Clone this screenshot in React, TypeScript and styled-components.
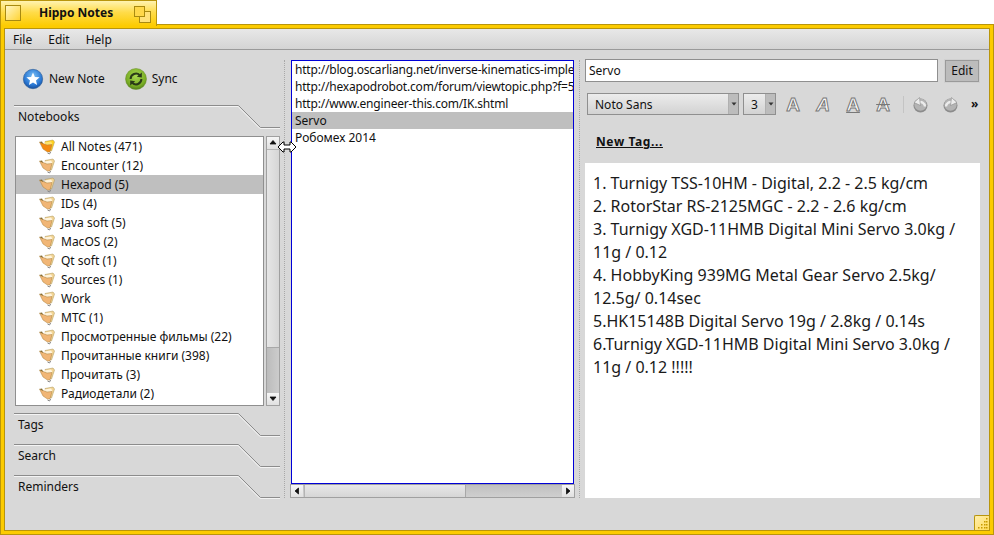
import styled, { createGlobalStyle } from 'styled-components';

const GlobalStyle = createGlobalStyle`
  html, body {
    margin: 0;
    padding: 0;
    background: #ffffff;
  }
  body {
    font-family: "Noto Sans", sans-serif;
    font-size: 12px;
    color: #111111;
  }
  * {
    box-sizing: border-box;
  }
`;

const Page = styled.div`
  position: relative;
  width: 994px;
  height: 535px;
  display: flex;
  flex-direction: column;
  overflow: hidden;
`;

const TitleTab = styled.div`
  position: relative;
  z-index: 1;
  width: 157px;
  height: 26px;
  margin-bottom: -2px;
  flex: none;
  display: flex;
  align-items: flex-start;
  padding: 4px 5px 0 4px;
  background: linear-gradient(#fff3b0 0, #ffdc4a 45%, #fccb00 100%);
  border: 1px solid #b8950c;
  border-bottom: none;
`;

const TabSquare = styled.div`
  width: 16px;
  height: 16px;
  flex: none;
  border: 1px solid #a88a10;
  background: linear-gradient(135deg, #fff6c4, #ffd435);
`;

const TabTitle = styled.div`
  flex: 1;
  padding-left: 18px;
  line-height: 16px;
  font-weight: 700;
  font-size: 12px;
`;

const Frame = styled.div`
  flex: 1;
  min-height: 0;
  padding: 3px;
  background: #fccb00;
  border: 1px solid #b8950c;
  position: relative;
`;

const FrameInner = styled.div`
  height: 100%;
  display: flex;
  flex-direction: column;
  background: #d8d8d8;
  border: 1px solid #b8950c;
`;

const MenuBar = styled.div`
  height: 21px;
  flex: none;
  display: flex;
  align-items: center;
  padding-left: 8px;
  gap: 16px;
  background: linear-gradient(#e8e8e8, #d4d4d4);
  border-bottom: 1px solid #9a9a9a;
`;

const MenuItem = styled.span`
  font-size: 12px;
`;

const Main = styled.div`
  flex: 1;
  min-height: 0;
  display: flex;
  padding: 10px 9px 0 9px;
`;

const LeftColumn = styled.div`
  width: 266px;
  flex: none;
  display: flex;
  flex-direction: column;
`;

const ActionBar = styled.div`
  height: 45px;
  padding: 0 0 8px 8px;
  display: flex;
  align-items: center;
  gap: 20px;
`;

const ActionButton = styled.div`
  display: flex;
  align-items: center;
  gap: 5px;
`;

const SectionHead = styled.div<{ $gap?: number }>`
  position: relative;
  height: 23px;
  flex: none;
  margin-top: ${(p) => p.$gap ?? 0}px;
  padding: 3px 0 0 4px;
`;

const BevelLine = styled.svg`
  position: absolute;
  left: 0;
  top: 0;
`;

const SectionLabel = styled.span`
  position: relative;
`;

const TreeRow = styled.div`
  height: 270px;
  flex: none;
  margin-top: 8px;
  display: flex;
  gap: 2px;
`;

const TreeList = styled.div`
  width: 249px;
  margin-left: 1px;
  background: #ffffff;
  border: 1px solid #8f8f8f;
  overflow: hidden;
`;

const TreeItem = styled.div<{ $active?: boolean }>`
  height: 19px;
  display: flex;
  align-items: center;
  padding-left: 23px;
  gap: 6px;
  white-space: nowrap;
  background: ${(p) => (p.$active ? '#bfbfbf' : 'transparent')};
`;

const VScroll = styled.div`
  width: 14px;
  flex: none;
  display: flex;
  flex-direction: column;
  border: 1px solid #a0a0a0;
  background: #c4c4c4;
`;

const HScroll = styled.div`
  height: 14px;
  flex: none;
  display: flex;
  border: 1px solid #a0a0a0;
  background: linear-gradient(#c0c0c0, #cfcfcf);
`;

const ScrollButton = styled.div`
  width: 12px;
  height: 12px;
  flex: none;
  display: flex;
  align-items: center;
  justify-content: center;
  background: linear-gradient(#f6f6f6, #e0e0e0);
`;

const VThumb = styled.div`
  height: 199px;
  background: linear-gradient(90deg, #e6e6e6, #d6d6d6);
  border-top: 1px solid #b4b4b4;
  border-bottom: 1px solid #a8a8a8;
`;

const VTrack = styled.div`
  flex: 1;
  background: linear-gradient(90deg, #bcbcbc, #cccccc);
`;

const HThumb = styled.div`
  width: 162px;
  margin-left: 1px;
  background: linear-gradient(#e8e8e8, #d6d6d6);
  border-left: 1px solid #b4b4b4;
  border-right: 1px solid #a8a8a8;
`;

const HTrack = styled.div`
  flex: 1;
`;

const Splitter = styled.div`
  width: 10px;
  flex: none;
  padding-left: 4px;
  display: flex;
`;

const SplitterDots = styled.div`
  width: 1px;
  height: 438px;
  border-left: 1px dotted #a8a8a8;
`;

const NoteColumn = styled.div`
  width: 285px;
  height: 438px;
  flex: none;
  display: flex;
  flex-direction: column;
`;

const NoteList = styled.div`
  height: 424px;
  flex: none;
  margin: 0 1px;
  background: #ffffff;
  border: 1px solid #0000d8;
  overflow: hidden;
`;

const NoteItem = styled.div<{ $active?: boolean; $url?: boolean }>`
  height: 17px;
  line-height: 17px;
  padding-left: 3px;
  white-space: nowrap;
  overflow: hidden;
  letter-spacing: ${(p) => (p.$url ? '-0.19px' : 'normal')};
  background: ${(p) => (p.$active ? '#bfbfbf' : 'transparent')};
`;

const EditorColumn = styled.div`
  width: 395px;
  height: 438px;
  flex: none;
  display: flex;
  flex-direction: column;
`;

const TitleRow = styled.div`
  height: 23px;
  flex: none;
  margin-top: -1px;
  display: flex;
  align-items: flex-start;
  justify-content: space-between;
`;

const TitleInput = styled.div`
  width: 353px;
  height: 23px;
  line-height: 21px;
  padding-left: 3px;
  background: #ffffff;
  border: 1px solid #8f8f8f;
`;

const EditButton = styled.div`
  width: 34px;
  height: 22px;
  margin: 1px 1px 0 0;
  line-height: 20px;
  text-align: center;
  background: #bcbcbc;
  border: 1px solid #9a9a9a;
  outline: 1px solid #d0d0d0;
`;

const FormatRow = styled.div`
  height: 23px;
  flex: none;
  margin-top: 11px;
  padding-left: 2px;
  display: flex;
  align-items: flex-start;
`;

const Combo = styled.div<{ $width: number }>`
  width: ${(p) => p.$width}px;
  height: 22px;
  flex: none;
  display: flex;
  background: linear-gradient(#ececec, #d2d2d2);
  border: 1px solid #8f8f8f;
  margin-right: 4px;
`;

const ComboText = styled.div`
  flex: 1;
  line-height: 21px;
  padding-left: 7px;
`;

const ComboArrow = styled.div`
  width: 10px;
  display: flex;
  align-items: center;
  justify-content: center;
  background: #bcbcbc;
  border-left: 1px solid #b0b0b0;
`;

const GlyphGroup = styled.div`
  display: flex;
  flex: none;
  margin-left: -2px;
`;

const FormatGlyph = styled.span<{ $italic?: boolean; $under?: boolean; $strike?: boolean }>`
  width: 30px;
  flex: none;
  text-align: center;
  font-family: "Liberation Sans", sans-serif;
  font-weight: 700;
  font-size: 19px;
  line-height: 23px;
  color: #fafafa;
  -webkit-text-stroke: 1px #787878;
  font-style: ${(p) => (p.$italic ? 'italic' : 'normal')};
  text-decoration: ${(p) => (p.$under ? 'underline' : p.$strike ? 'line-through' : 'none')};
`;

const ToolSeparator = styled.div`
  width: 1px;
  height: 17px;
  flex: none;
  margin: 3px 1px 0 5px;
  background: #c4c4c4;
`;

const HistoryIcon = styled.svg`
  flex: none;
  margin: 4px 7px 0 8px;
`;

const MoreGlyph = styled.span`
  margin-left: 6px;
  line-height: 22px;
  font-size: 12px;
  font-weight: 700;
`;

const TagRow = styled.div`
  height: 47px;
  flex: none;
  padding: 17px 0 0 11px;
`;

const NewTag = styled.span`
  font-weight: 700;
  font-size: 12px;
  letter-spacing: 0.6px;
  text-decoration: underline;
`;

const Editor = styled.div`
  flex: 1;
  min-height: 0;
  background: #ffffff;
  padding: 9px 8px;
  font-size: 16px;
  line-height: 23px;
  color: #1a1a1a;
`;

const Grip = styled.div`
  position: absolute;
  right: 4px;
  bottom: 4px;
  width: 15px;
  height: 15px;
  background: linear-gradient(135deg, #ffeeaa, #ffdc5c);
  border-left: 1px solid #b8950c;
  border-top: 1px solid #b8950c;
  border-top-left-radius: 2px;
`;

const GripDots = styled.svg`
  display: block;
`;

const CursorOverlay = styled.svg`
  position: absolute;
  z-index: 2;
  left: 277px;
  top: 140px;
`;

const TabOverlap = styled.svg`
  flex: none;
  margin: 1px 0 0 0;
`;

const treeItems = [
  'All Notes (471)',
  'Encounter (12)',
  'Hexapod (5)',
  'IDs (4)',
  'Java soft (5)',
  'MacOS (2)',
  'Qt soft (1)',
  'Sources (1)',
  'Work',
  'МТС (1)',
  'Просмотренные фильмы (22)',
  'Прочитанные книги (398)',
  'Прочитать (3)',
  'Радиодетали (2)',
];

const noteItems = [
  'http://blog.oscarliang.net/inverse-kinematics-imple',
  'http://hexapodrobot.com/forum/viewtopic.php?f=5',
  'http://www.engineer-this.com/IK.shtml',
  'Servo',
  'Робомех 2014',
];

const servoLines = [
  '1. Turnigy TSS-10HM - Digital, 2.2 - 2.5 kg/cm',
  '2. RotorStar RS-2125MGC - 2.2 - 2.6 kg/cm',
  '3. Turnigy XGD-11HMB Digital Mini Servo 3.0kg / 11g / 0.12',
  '4. HobbyKing 939MG Metal Gear Servo 2.5kg/ 12.5g/ 0.14sec',
  '5.HK15148B Digital Servo 19g / 2.8kg / 0.14s',
  '6.Turnigy XGD-11HMB Digital Mini Servo 3.0kg / 11g / 0.12 !!!!!',
];

function FolderIcon({ main }: { main?: boolean }) {
  const back = main ? '#ffd21f' : '#f3d596';
  const paper = main ? '#ffe36a' : '#fff4dc';
  const front = main ? '#f58a0f' : '#f1b676';
  return (
    <svg width="16" height="16" viewBox="0 0 16 16">
      <path d="M6 2.5 L14 1 L15.5 3 L12.5 12 L8 9 Z" fill={back} stroke="#a89050" strokeWidth="0.5" />
      <path d="M5 3.5 L12 2.5 L13.2 4.5 L10.5 10 Z" fill={paper} />
      <path d="M0.5 3 L8 6 L13 5.5 L11 13 L8.5 13 L4 10 Z" fill={front} stroke="#a8803c" strokeWidth="0.5" />
      <path d="M0.5 3 L3 2.4 L4.2 5 Z" fill="#80682c" />
      <path d="M8.5 14 L10.5 15 L11.7 13" fill="none" stroke="#8a8a8a" strokeWidth="1" />
    </svg>
  );
}

function SectionTitle({ label, gap }: { label: string; gap?: number }) {
  return (
    <SectionHead $gap={gap}>
      <BevelLine width="266" height="24">
        <path d="M0 0.5 H224.5 L246.5 22.5 H266" fill="none" stroke="#8c8c8c" />
        <path d="M0 1.5 H224 L246 23.5 H266" fill="none" stroke="#f4f4f4" />
      </BevelLine>
      <SectionLabel>{label}</SectionLabel>
    </SectionHead>
  );
}

function Arrow({ dir }: { dir: 'up' | 'down' | 'left' | 'right' }) {
  const points = {
    up: '1,5 4,1.5 7,5',
    down: '1,2 4,5.5 7,2',
    left: '5.5,1 2,4 5.5,7',
    right: '2.5,1 6,4 2.5,7',
  }[dir];
  return (
    <svg width="8" height="8" viewBox="0 0 8 8">
      <polygon points={points} fill="#111111" stroke="#111111" strokeWidth="0.8" />
    </svg>
  );
}

function ComboCaret() {
  return (
    <svg width="6" height="4" viewBox="0 0 6 4">
      <polygon points="0.5,0.5 5.5,0.5 3,3.5" fill="#333333" />
    </svg>
  );
}

function NewNoteIcon() {
  return (
    <svg width="22" height="22" viewBox="0 0 22 22">
      <defs>
        <radialGradient id="blueBall" cx="50%" cy="35%" r="65%">
          <stop offset="0" stopColor="#7cc0f4" />
          <stop offset="0.7" stopColor="#2a78d4" />
          <stop offset="1" stopColor="#174f9c" />
        </radialGradient>
      </defs>
      <circle cx="11" cy="11" r="9.7" fill="url(#blueBall)" stroke="#2b5a94" strokeWidth="0.6" />
      <polygon
        points="11,4.5 12.9,8.9 17.6,9.3 14,12.4 15.1,17 11,14.6 6.9,17 8,12.4 4.4,9.3 9.1,8.9"
        fill="#ffffff"
      />
    </svg>
  );
}

function SyncIcon() {
  return (
    <svg width="22" height="22" viewBox="0 0 22 22">
      <defs>
        <radialGradient id="greenBall" cx="50%" cy="35%" r="65%">
          <stop offset="0" stopColor="#a8d850" />
          <stop offset="0.75" stopColor="#78ac24" />
          <stop offset="1" stopColor="#52801a" />
        </radialGradient>
      </defs>
      <circle cx="11" cy="11" r="10.5" fill="url(#greenBall)" stroke="#6a8f2c" strokeWidth="0.5" />
      <path d="M5.6 11 A5.4 5.4 0 0 1 14.8 7.2" fill="none" stroke="#2a3a18" strokeWidth="2" />
      <polygon points="16.8,4.4 16.8,9.6 11.8,8.8" fill="#2a3a18" />
      <path d="M16.4 11 A5.4 5.4 0 0 1 7.2 14.8" fill="none" stroke="#2a3a18" strokeWidth="2" />
      <polygon points="5.2,17.6 5.2,12.4 10.2,13.2" fill="#2a3a18" />
    </svg>
  );
}

function HistoryGlyph({ flip }: { flip?: boolean }) {
  return (
    <HistoryIcon width="15" height="16" viewBox="0 0 15 16">
      <g transform={flip ? 'translate(15,0) scale(-1,1)' : undefined}>
        <circle cx="7.5" cy="8.6" r="7" fill="#8c8c8c" />
        <circle cx="7.5" cy="7.6" r="6.2" fill="#b4b4b4" />
        <path d="M12 9.5 A4.5 4.5 0 0 0 5.5 5.5" fill="none" stroke="#ececec" strokeWidth="2.4" />
        <polygon points="6.5,0.5 1,5.5 7.5,8.5" fill="#ececec" stroke="#8c8c8c" strokeWidth="0.6" />
      </g>
    </HistoryIcon>
  );
}

export default function App() {
  return (
    <Page>
      <GlobalStyle />
      <TitleTab>
        <TabSquare />
        <TabTitle>Hippo Notes</TabTitle>
        <TabOverlap width="17" height="17" viewBox="0 0 17 17">
          <rect x="5.5" y="5.5" width="11" height="11" fill="#ffe27a" stroke="#a88a10" />
          <rect x="0.5" y="0.5" width="10" height="10" fill="#ffd84a" stroke="#a88a10" />
        </TabOverlap>
      </TitleTab>
      <Frame>
        <FrameInner>
          <MenuBar>
            <MenuItem>File</MenuItem>
            <MenuItem>Edit</MenuItem>
            <MenuItem>Help</MenuItem>
          </MenuBar>
          <Main>
            <LeftColumn>
              <ActionBar>
                <ActionButton>
                  <NewNoteIcon />
                  <span>New Note</span>
                </ActionButton>
                <ActionButton>
                  <SyncIcon />
                  <span>Sync</span>
                </ActionButton>
              </ActionBar>
              <SectionTitle label="Notebooks" />
              <TreeRow>
                <TreeList>
                  {treeItems.map((item, index) => (
                    <TreeItem key={item} $active={item.startsWith('Hexapod')}>
                      <FolderIcon main={index === 0} />
                      <span>{item}</span>
                    </TreeItem>
                  ))}
                </TreeList>
                <VScroll>
                  <ScrollButton>
                    <Arrow dir="up" />
                  </ScrollButton>
                  <VThumb />
                  <VTrack />
                  <ScrollButton>
                    <Arrow dir="down" />
                  </ScrollButton>
                </VScroll>
              </TreeRow>
              <SectionTitle label="Tags" gap={7} />
              <SectionTitle label="Search" gap={8} />
              <SectionTitle label="Reminders" gap={8} />
            </LeftColumn>
            <Splitter>
              <SplitterDots />
            </Splitter>
            <NoteColumn>
              <NoteList>
                {noteItems.map((item) => (
                  <NoteItem key={item} $active={item === 'Servo'} $url={item.startsWith('http')}>
                    {item}
                  </NoteItem>
                ))}
              </NoteList>
              <HScroll>
                <ScrollButton>
                  <Arrow dir="left" />
                </ScrollButton>
                <HThumb />
                <HTrack />
                <ScrollButton>
                  <Arrow dir="right" />
                </ScrollButton>
              </HScroll>
            </NoteColumn>
            <Splitter>
              <SplitterDots />
            </Splitter>
            <EditorColumn>
              <TitleRow>
                <TitleInput>Servo</TitleInput>
                <EditButton>Edit</EditButton>
              </TitleRow>
              <FormatRow>
                <Combo $width={152}>
                  <ComboText>Noto Sans</ComboText>
                  <ComboArrow>
                    <ComboCaret />
                  </ComboArrow>
                </Combo>
                <Combo $width={33}>
                  <ComboText>3</ComboText>
                  <ComboArrow>
                    <ComboCaret />
                  </ComboArrow>
                </Combo>
                <GlyphGroup>
                  <FormatGlyph>A</FormatGlyph>
                  <FormatGlyph $italic>A</FormatGlyph>
                  <FormatGlyph $under>A</FormatGlyph>
                  <FormatGlyph $strike>A</FormatGlyph>
                </GlyphGroup>
                <ToolSeparator />
                <HistoryGlyph />
                <HistoryGlyph flip />
                <MoreGlyph>»</MoreGlyph>
              </FormatRow>
              <TagRow>
                <NewTag>New Tag...</NewTag>
              </TagRow>
              <Editor>
                {servoLines.map((line) => (
                  <div key={line}>{line}</div>
                ))}
              </Editor>
            </EditorColumn>
          </Main>
        </FrameInner>
        <Grip>
          <GripDots width="14" height="14" viewBox="0 0 14 14">
            <g fill="#c89a00">
              <rect x="11" y="2" width="1.5" height="1.5" />
              <rect x="9" y="5" width="1.5" height="1.5" />
              <rect x="11" y="5" width="1.5" height="1.5" />
              <rect x="6" y="8" width="1.5" height="1.5" />
              <rect x="9" y="8" width="1.5" height="1.5" />
              <rect x="11" y="8" width="1.5" height="1.5" />
              <rect x="3" y="11" width="1.5" height="1.5" />
              <rect x="6" y="11" width="1.5" height="1.5" />
              <rect x="9" y="11" width="1.5" height="1.5" />
              <rect x="11" y="11" width="1.5" height="1.5" />
            </g>
          </GripDots>
        </Grip>
      </Frame>
      <CursorOverlay width="20" height="14" viewBox="0 0 20 14">
        <path
          d="M1 7 L6 2 L7 2 L7 5 L13 5 L13 2 L14 2 L19 7 L14 12 L13 12 L13 9 L7 9 L7 12 L6 12 Z"
          fill="#ffffff"
          stroke="#000000"
          strokeWidth="1"
        />
      </CursorOverlay>
    </Page>
  );
}
